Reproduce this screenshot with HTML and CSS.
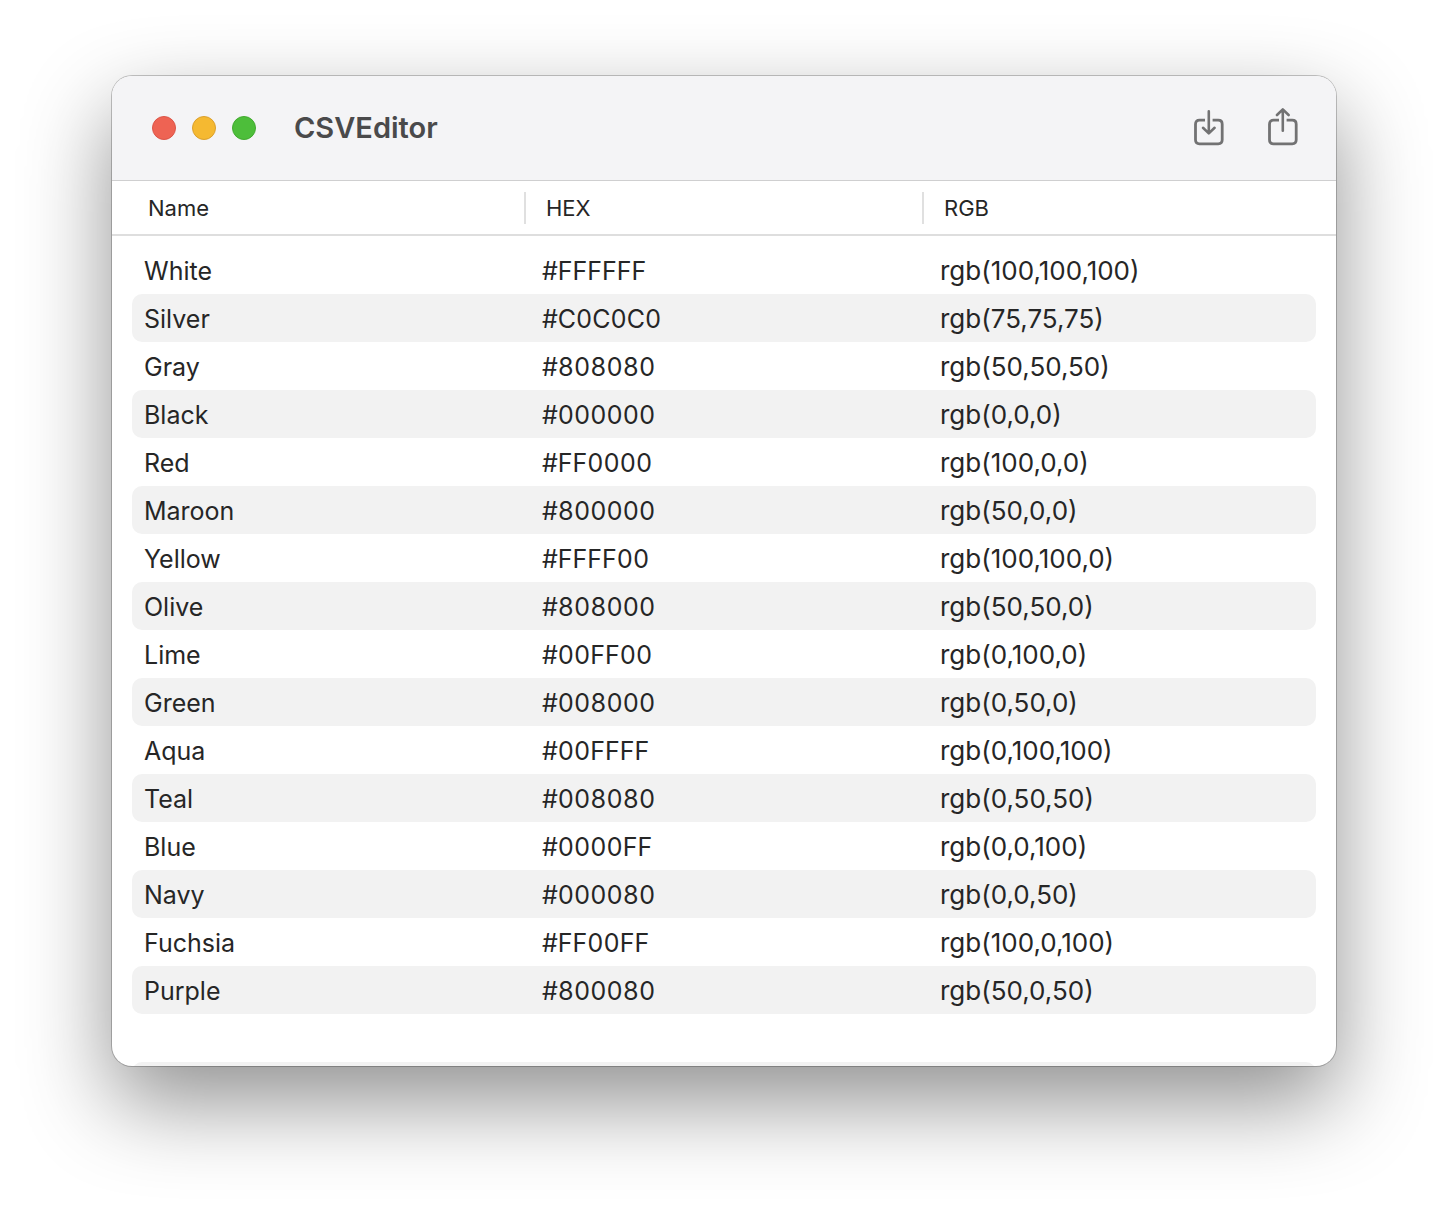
FILE: index.html
```html
<!DOCTYPE html>
<html lang="en">
<head>
<meta charset="utf-8">
<meta name="viewport" content="width=device-width, initial-scale=1">
<title>CSVEditor</title>
<link rel="stylesheet" href="styles.css">
</head>
<body>
<main class="window">
  <header class="titlebar">
    <div class="controls">
      <button class="light light-close" type="button" aria-label="Close"></button>
      <button class="light light-minimize" type="button" aria-label="Minimize"></button>
      <button class="light light-zoom" type="button" aria-label="Zoom"></button>
    </div>
    <h1 class="title">CSVEditor</h1>
    <div class="tools">
      <button class="tool" type="button" aria-label="Import">
        <svg viewBox="0 0 30 40" width="30" height="40" aria-hidden="true">
          <path d="M11 12.2H5.5Q1.5 12.2 1.5 16.2V31.8Q1.5 35.8 5.5 35.8H24.2Q28.2 35.8 28.2 31.8V16.2Q28.2 12.2 24.2 12.2H18.6" stroke-width="2.8"/>
          <path d="M14.8 3.4V25M9 19.8L14.8 25.4L20.6 19.8" stroke-width="2.6" stroke-linecap="round" stroke-linejoin="round"/>
        </svg>
      </button>
      <button class="tool" type="button" aria-label="Share">
        <svg viewBox="0 0 30 40" width="30" height="40" aria-hidden="true">
          <path d="M11 12.2H5.5Q1.5 12.2 1.5 16.2V31.8Q1.5 35.8 5.5 35.8H24.2Q28.2 35.8 28.2 31.8V16.2Q28.2 12.2 24.2 12.2H18.6" stroke-width="2.8"/>
          <path d="M14.8 22.8V1.8M9 7L14.8 1.4L20.6 7" stroke-width="2.6" stroke-linecap="round" stroke-linejoin="round"/>
        </svg>
      </button>
    </div>
  </header>
  <table class="grid">
    <thead>
      <tr><th scope="col">Name</th><th scope="col">HEX</th><th scope="col">RGB</th></tr>
    </thead>
    <tbody>
      <tr><td>White</td><td>#FFFFFF</td><td class="rgb">rgb(100,100,100)</td></tr>
      <tr><td>Silver</td><td>#C0C0C0</td><td class="rgb">rgb(75,75,75)</td></tr>
      <tr><td>Gray</td><td>#808080</td><td class="rgb">rgb(50,50,50)</td></tr>
      <tr><td>Black</td><td>#000000</td><td class="rgb">rgb(0,0,0)</td></tr>
      <tr><td>Red</td><td>#FF0000</td><td class="rgb">rgb(100,0,0)</td></tr>
      <tr><td>Maroon</td><td>#800000</td><td class="rgb">rgb(50,0,0)</td></tr>
      <tr><td>Yellow</td><td>#FFFF00</td><td class="rgb">rgb(100,100,0)</td></tr>
      <tr><td>Olive</td><td>#808000</td><td class="rgb">rgb(50,50,0)</td></tr>
      <tr><td>Lime</td><td>#00FF00</td><td class="rgb">rgb(0,100,0)</td></tr>
      <tr><td>Green</td><td>#008000</td><td class="rgb">rgb(0,50,0)</td></tr>
      <tr><td>Aqua</td><td>#00FFFF</td><td class="rgb">rgb(0,100,100)</td></tr>
      <tr><td>Teal</td><td>#008080</td><td class="rgb">rgb(0,50,50)</td></tr>
      <tr><td>Blue</td><td>#0000FF</td><td class="rgb">rgb(0,0,100)</td></tr>
      <tr><td>Navy</td><td>#000080</td><td class="rgb">rgb(0,0,50)</td></tr>
      <tr><td>Fuchsia</td><td>#FF00FF</td><td class="rgb">rgb(100,0,100)</td></tr>
      <tr><td>Purple</td><td>#800080</td><td class="rgb">rgb(50,0,50)</td></tr>
    </tbody>
  </table>
  <div class="overflow"><div class="next-row"></div></div>
</main>
</body>
</html>
```
FILE: styles.css
```css
* {
  box-sizing: border-box;
}

body {
  margin: 0;
  padding: 76px 112px 148px;
  background: #fff;
  color: #262626;
  font-family: Inter, "Liberation Sans", sans-serif;
}

.window {
  overflow: hidden;
  border-radius: 20px;
  background: #fff;
  box-shadow: 0 0 0 1px rgba(0, 0, 0, 0.22), 0 36px 88px rgba(0, 0, 0, 0.44);
}

.titlebar {
  display: flex;
  align-items: center;
  height: 105px;
  padding: 0 38px 0 40px;
  border-bottom: 1px solid #cfcfd0;
  background: #f4f4f6;
}

.controls {
  display: flex;
  gap: 16px;
}

.light {
  width: 24px;
  height: 24px;
  padding: 0;
  border: 1px solid;
  border-radius: 50%;
}

.light-close {
  border-color: #dc5548;
  background: #ee6353;
}

.light-minimize {
  border-color: #dba02d;
  background: #f5b931;
}

.light-zoom {
  border-color: #42aa30;
  background: #4dbe3a;
}

.title {
  margin: 0 0 0 38px;
  color: #4a4a4b;
  font-size: 29px;
  font-weight: 600;
  line-height: 36px;
}

.tools {
  display: flex;
  gap: 44px;
  margin-left: auto;
}

.tool {
  width: 30px;
  height: 40px;
  padding: 0;
  border: 0;
  background: none;
  color: #727273;
}

.tool svg {
  display: block;
  fill: none;
  stroke: currentColor;
}

.grid,
.grid thead,
.grid tbody {
  display: block;
}

.grid tr {
  display: grid;
  grid-template-columns: 398fr 398fr 388fr;
  align-items: center;
}

.grid thead tr {
  height: 55px;
  padding: 1px 26px 0 14px;
  border-bottom: 2px solid #dedede;
}

.grid th {
  padding: 0 0 0 22px;
  font-size: 22px;
  font-weight: 400;
  line-height: 32px;
  text-align: left;
}

.grid th + th {
  padding-left: 20px;
  border-left: 2px solid #e0e0e0;
}

.grid tbody {
  padding: 10px 20px 0;
}

.grid tbody tr {
  height: 48px;
  border-radius: 10px;
}

.grid tbody tr:nth-child(even),
.next-row {
  background: #f2f2f2;
}

.grid td {
  padding: 2px 12px 0;
  font-size: 25px;
  font-variant-numeric: tabular-nums;
  line-height: 32px;
}

.grid .rgb {
  font-size: 26px;
  font-variant-numeric: normal;
}

.overflow {
  height: 52px;
  padding: 48px 20px 0;
  overflow: hidden;
}

.next-row {
  height: 48px;
  border-radius: 10px;
}
```
